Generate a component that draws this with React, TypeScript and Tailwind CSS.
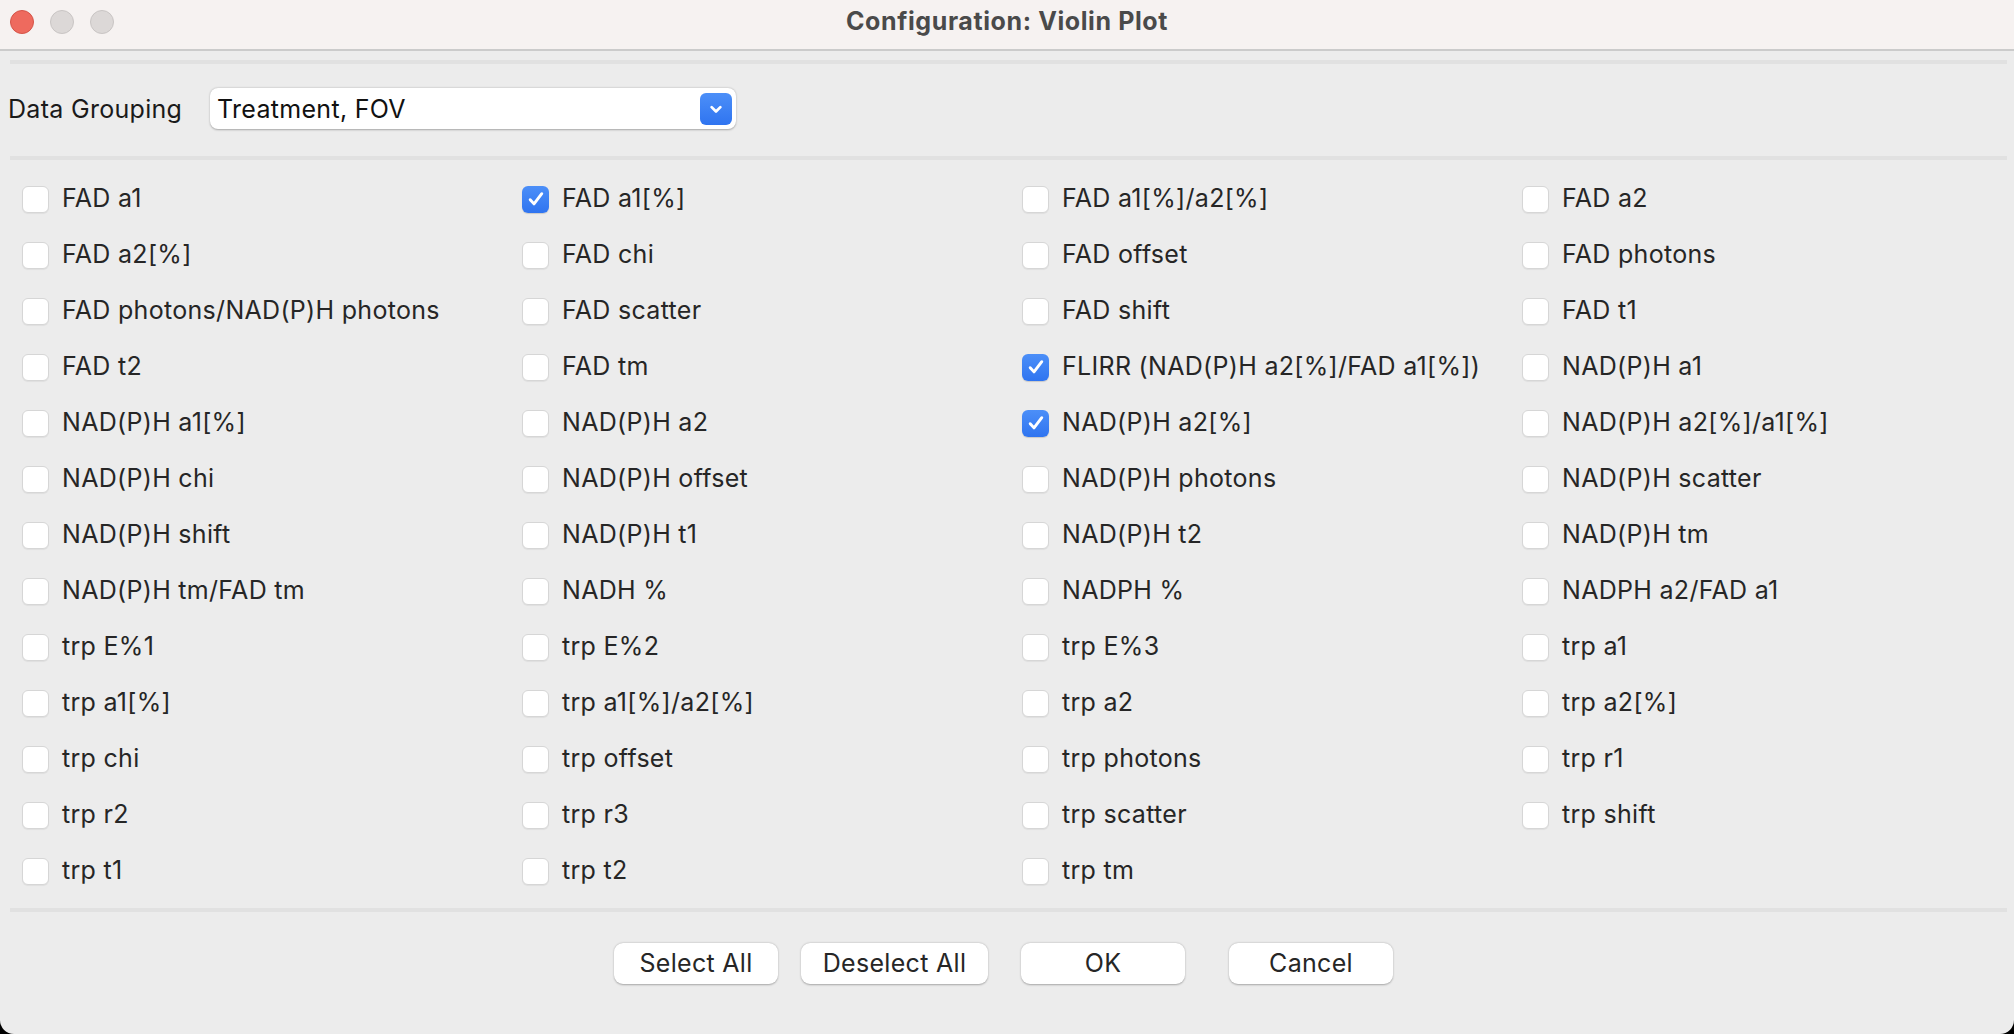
import React from "react";

const items: [string, boolean][] = [
  ["FAD a1", false], ["FAD a1[%]", true], ["FAD a1[%]/a2[%]", false], ["FAD a2", false],
  ["FAD a2[%]", false], ["FAD chi", false], ["FAD offset", false], ["FAD photons", false],
  ["FAD photons/NAD(P)H photons", false], ["FAD scatter", false], ["FAD shift", false], ["FAD t1", false],
  ["FAD t2", false], ["FAD tm", false], ["FLIRR (NAD(P)H a2[%]/FAD a1[%])", true], ["NAD(P)H a1", false],
  ["NAD(P)H a1[%]", false], ["NAD(P)H a2", false], ["NAD(P)H a2[%]", true], ["NAD(P)H a2[%]/a1[%]", false],
  ["NAD(P)H chi", false], ["NAD(P)H offset", false], ["NAD(P)H photons", false], ["NAD(P)H scatter", false],
  ["NAD(P)H shift", false], ["NAD(P)H t1", false], ["NAD(P)H t2", false], ["NAD(P)H tm", false],
  ["NAD(P)H tm/FAD tm", false], ["NADH %", false], ["NADPH %", false], ["NADPH a2/FAD a1", false],
  ["trp E%1", false], ["trp E%2", false], ["trp E%3", false], ["trp a1", false],
  ["trp a1[%]", false], ["trp a1[%]/a2[%]", false], ["trp a2", false], ["trp a2[%]", false],
  ["trp chi", false], ["trp offset", false], ["trp photons", false], ["trp r1", false],
  ["trp r2", false], ["trp r3", false], ["trp scatter", false], ["trp shift", false],
  ["trp t1", false], ["trp t2", false], ["trp tm", false],
];

function Check({ checked }: { checked: boolean }) {
  if (checked) {
    return (
      <div className="w-[27px] h-[27px] rounded-[6px] bg-gradient-to-b from-[#4c8ff8] to-[#2f74f0] flex items-center justify-center shadow-[0_1px_1px_rgba(0,0,0,0.15)] shrink-0">
        <svg width="20" height="20" viewBox="0 0 18 18">
          <path d="M3.8 9.6 L7.2 13.4 L14.2 4.2" fill="none" stroke="white" strokeWidth="2.6" strokeLinecap="round" strokeLinejoin="round" />
        </svg>
      </div>
    );
  }
  return (
    <div className="w-[27px] h-[27px] rounded-[6px] bg-white border border-[#d6d6d6] shadow-[0_1px_1px_rgba(0,0,0,0.06)] shrink-0" />
  );
}

function Sep() {
  return <div className="ml-[10px] mr-[7px] h-[4px] bg-[#e1e1e1]" />;
}

function Btn({ label, w }: { label: string; w: string }) {
  return (
    <button className={`${w} h-[41px] rounded-[9px] bg-white text-[25px] tracking-[0.3px] text-[#262626] shadow-[0_0.5px_2px_rgba(0,0,0,0.3)] flex items-center justify-center`}>
      {label}
    </button>
  );
}

export default function App() {
  return (
    <div className="w-[2014px] h-[1034px] bg-black overflow-hidden" style={{ fontFamily: "Inter, 'Noto Sans', sans-serif" }}>
      <div className="w-full h-full bg-[#ececec] rounded-b-[14px] flex flex-col">
        <div className="h-[51px] bg-[#f6f2f1] border-b-2 border-[#cbcbcb] relative flex items-center justify-center shrink-0">
          <div className="absolute left-[10px] top-[10px] flex gap-[16px]">
            <div className="w-[24px] h-[24px] rounded-full bg-[#ee6a5e] border border-[#d55448]" />
            <div className="w-[24px] h-[24px] rounded-full bg-[#dcd8d7] border border-[#c9c5c4]" />
            <div className="w-[24px] h-[24px] rounded-full bg-[#dcd8d7] border border-[#c9c5c4]" />
          </div>
          <div className="text-[25px] tracking-[0.6px] font-bold text-[#4a4a4a] mt-[-6px]">Configuration: Violin Plot</div>
        </div>

        <div className="mt-[9px]"><Sep /></div>

        <div className="mt-[24px] h-[41px] flex items-center">
          <div className="ml-[8px] w-[202px] text-[25px] tracking-[0.3px] text-[#1a1a1a] mt-[3px]">Data Grouping</div>
          <div className="w-[526px] h-[41px] bg-white rounded-[8px] shadow-[0_0.5px_2px_rgba(0,0,0,0.3)] flex items-center justify-between pl-[7px] pr-[4px]">
            <span className="text-[25px] tracking-[0.3px] text-[#111] mt-[3px]">Treatment, FOV</span>
            <div className="w-[32px] h-[32px] rounded-[6px] bg-gradient-to-b from-[#4c8ff8] to-[#2f74f0] flex items-center justify-center">
              <svg width="20" height="20" viewBox="0 0 16 16">
                <path d="M4.5 6.5 L8 10 L11.5 6.5" fill="none" stroke="white" strokeWidth="2.2" strokeLinecap="round" strokeLinejoin="round" />
              </svg>
            </div>
          </div>
        </div>

        <div className="mt-[27px]"><Sep /></div>

        <div className="mt-[11px] ml-[22px] grid grid-cols-[500px_500px_500px_492px] auto-rows-[56px]">
          {items.map(([label, checked]) => (
            <div key={label} className="flex items-center gap-[13px]">
              <Check checked={checked} />
              <span className="text-[25px] tracking-[0.3px] text-[#262626] whitespace-nowrap">{label}</span>
            </div>
          ))}
        </div>

        <div className="mt-[9px]"><Sep /></div>

        <div className="mt-[31px] flex ml-[614px]">
          <Btn label="Select All" w="w-[164px]" />
          <div className="ml-[23px]"><Btn label="Deselect All" w="w-[187px]" /></div>
          <div className="ml-[33px]"><Btn label="OK" w="w-[164px]" /></div>
          <div className="ml-[44px]"><Btn label="Cancel" w="w-[164px]" /></div>
        </div>
      </div>
    </div>
  );
}
